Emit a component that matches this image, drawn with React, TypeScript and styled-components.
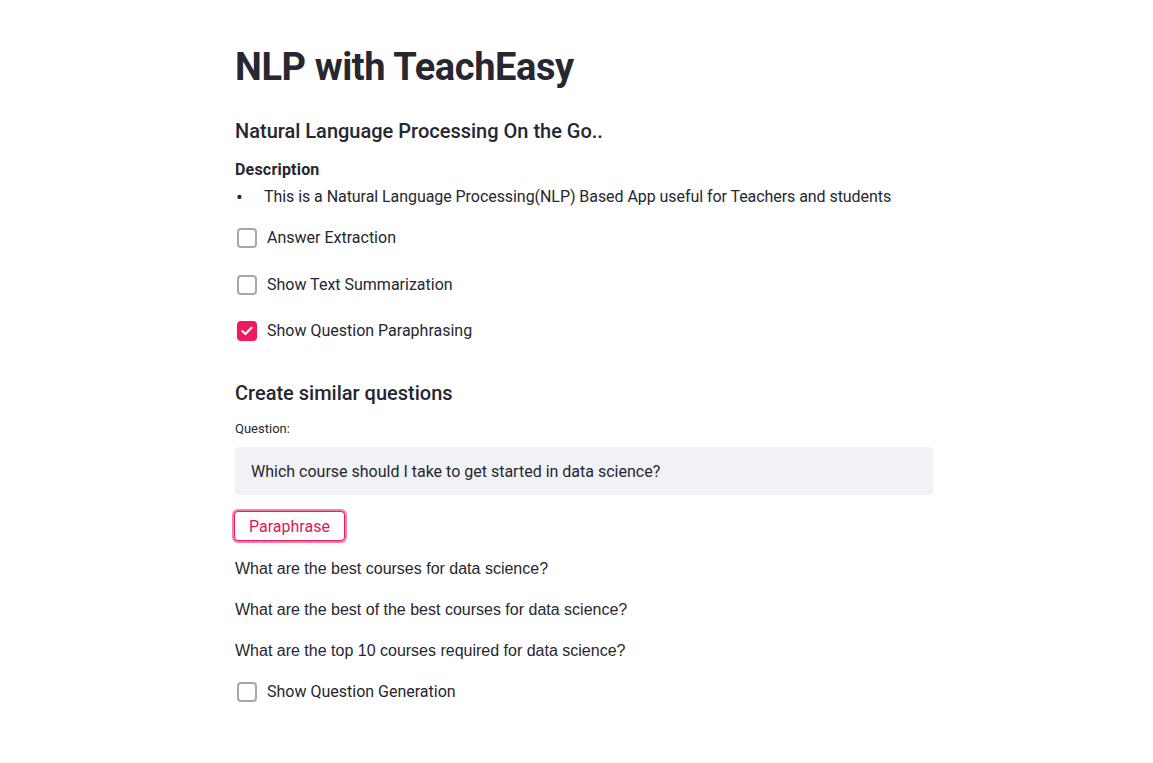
import { createGlobalStyle } from 'styled-components'
import styled from 'styled-components'

const GlobalStyle = createGlobalStyle`
    body {
        margin: 0;
        background: #ffffff;
        color: #262730;
        font-family: Roboto, "Noto Sans", sans-serif;
    }
`

const Page = styled.main`
    width: 698px;
    margin-left: 235px;
    padding-top: 42px;
    display: flex;
    flex-direction: column;
`

const Title = styled.h1`
    margin: 0;
    font-size: 38px;
    line-height: 50px;
    letter-spacing: -0.4px;
    font-weight: 700;
    color: #262730;
`

const SubHeading = styled.h3<{ $top: number }>`
    margin: ${(p) => p.$top}px 0 0;
    font-size: 20px;
    line-height: 28px;
    font-weight: 500;
    color: #262730;
`

const Label = styled.div`
    margin-top: 13px;
    font-size: 16px;
    line-height: 24px;
    font-weight: 700;
    letter-spacing: 0.2px;
`

const BulletList = styled.ul`
    margin: 3px 0 0;
    padding: 0;
    list-style: none;
`

const BulletItem = styled.li`
    display: flex;
    font-size: 16px;
    line-height: 24px;
    letter-spacing: -0.06px;

    &::before {
        content: '•';
        width: 28px;
        padding-left: 1px;
        font-size: 20px;
        flex-shrink: 0;
    }
`

const CheckGroup = styled.div<{ $top: number }>`
    margin-top: ${(p) => p.$top}px;
    display: flex;
    flex-direction: column;
    gap: 22.5px;
`

const CheckRow = styled.label`
    display: flex;
    align-items: center;
    gap: 10px;
    padding-left: 2px;
    font-size: 16px;
    line-height: 24px;
    cursor: pointer;
`

const Box = styled.span<{ $checked?: boolean }>`
    width: 20px;
    height: 20px;
    box-sizing: border-box;
    border-radius: 4px;
    border: 2px solid ${(p) => (p.$checked ? '#f0185e' : '#a3a8b4')};
    background: ${(p) => (p.$checked ? '#f0185e' : '#ffffff')};
    display: flex;
    align-items: center;
    justify-content: center;
`

const SmallLabel = styled.div`
    margin-top: 14px;
    font-size: 13px;
    line-height: 16px;
`

const TextInput = styled.div`
    margin-top: 10px;
    height: 48px;
    box-sizing: border-box;
    padding: 0 16px;
    display: flex;
    align-items: center;
    background: #f0f2f6;
    border-radius: 4px;
    font-size: 16px;
`

const Button = styled.button`
    margin-top: 16px;
    margin-left: -1px;
    align-self: flex-start;
    height: 30px;
    padding: 0 14px;
    border: 1px solid #f0185e;
    border-radius: 4px;
    background: #ffffff;
    color: #e0165a;
    font-family: inherit;
    font-size: 16px;
    box-shadow: 0 0 0 2px rgba(240, 24, 94, 0.55);
    cursor: pointer;
`

const Answers = styled.div`
    margin-top: 16px;
    display: flex;
    flex-direction: column;
    gap: 17px;
    font-family: "Liberation Sans", Arial, sans-serif;
    font-size: 16px;
    line-height: 24px;
`

const CheckBox = ({ label, checked }: { label: string; checked?: boolean }) => (
    <CheckRow>
        <Box $checked={checked}>
            {checked && (
                <svg width="12" height="10" viewBox="0 0 12 10" fill="none">
                    <path d="M1.5 5.2 L4.5 8 L10.5 1.8" stroke="#fff" strokeWidth="2.2" strokeLinecap="round" strokeLinejoin="round" />
                </svg>
            )}
        </Box>
        {label}
    </CheckRow>
)

const answers = [
    'What are the best courses for data science?',
    'What are the best of the best courses for data science?',
    'What are the top 10 courses required for data science?',
]

const App = () => {
    return (
        <>
            <GlobalStyle />
            <Page>
                <Title>NLP with TeachEasy</Title>
                <SubHeading $top={25}>Natural Language Processing On the Go..</SubHeading>
                <Label>Description</Label>
                <BulletList>
                    <BulletItem>This is a Natural Language Processing(NLP) Based App useful for Teachers and students</BulletItem>
                </BulletList>
                <CheckGroup $top={17}>
                    <CheckBox label="Answer Extraction" />
                    <CheckBox label="Show Text Summarization" />
                    <CheckBox label="Show Question Paraphrasing" checked />
                </CheckGroup>
                <SubHeading $top={36}>Create similar questions</SubHeading>
                <SmallLabel>Question:</SmallLabel>
                <TextInput>Which course should I take to get started in data science?</TextInput>
                <Button>Paraphrase</Button>
                <Answers>
                    {answers.map((a) => (
                        <div key={a}>{a}</div>
                    ))}
                </Answers>
                <CheckGroup $top={17}>
                    <CheckBox label="Show Question Generation" />
                </CheckGroup>
            </Page>
        </>
    )
}

export default App
